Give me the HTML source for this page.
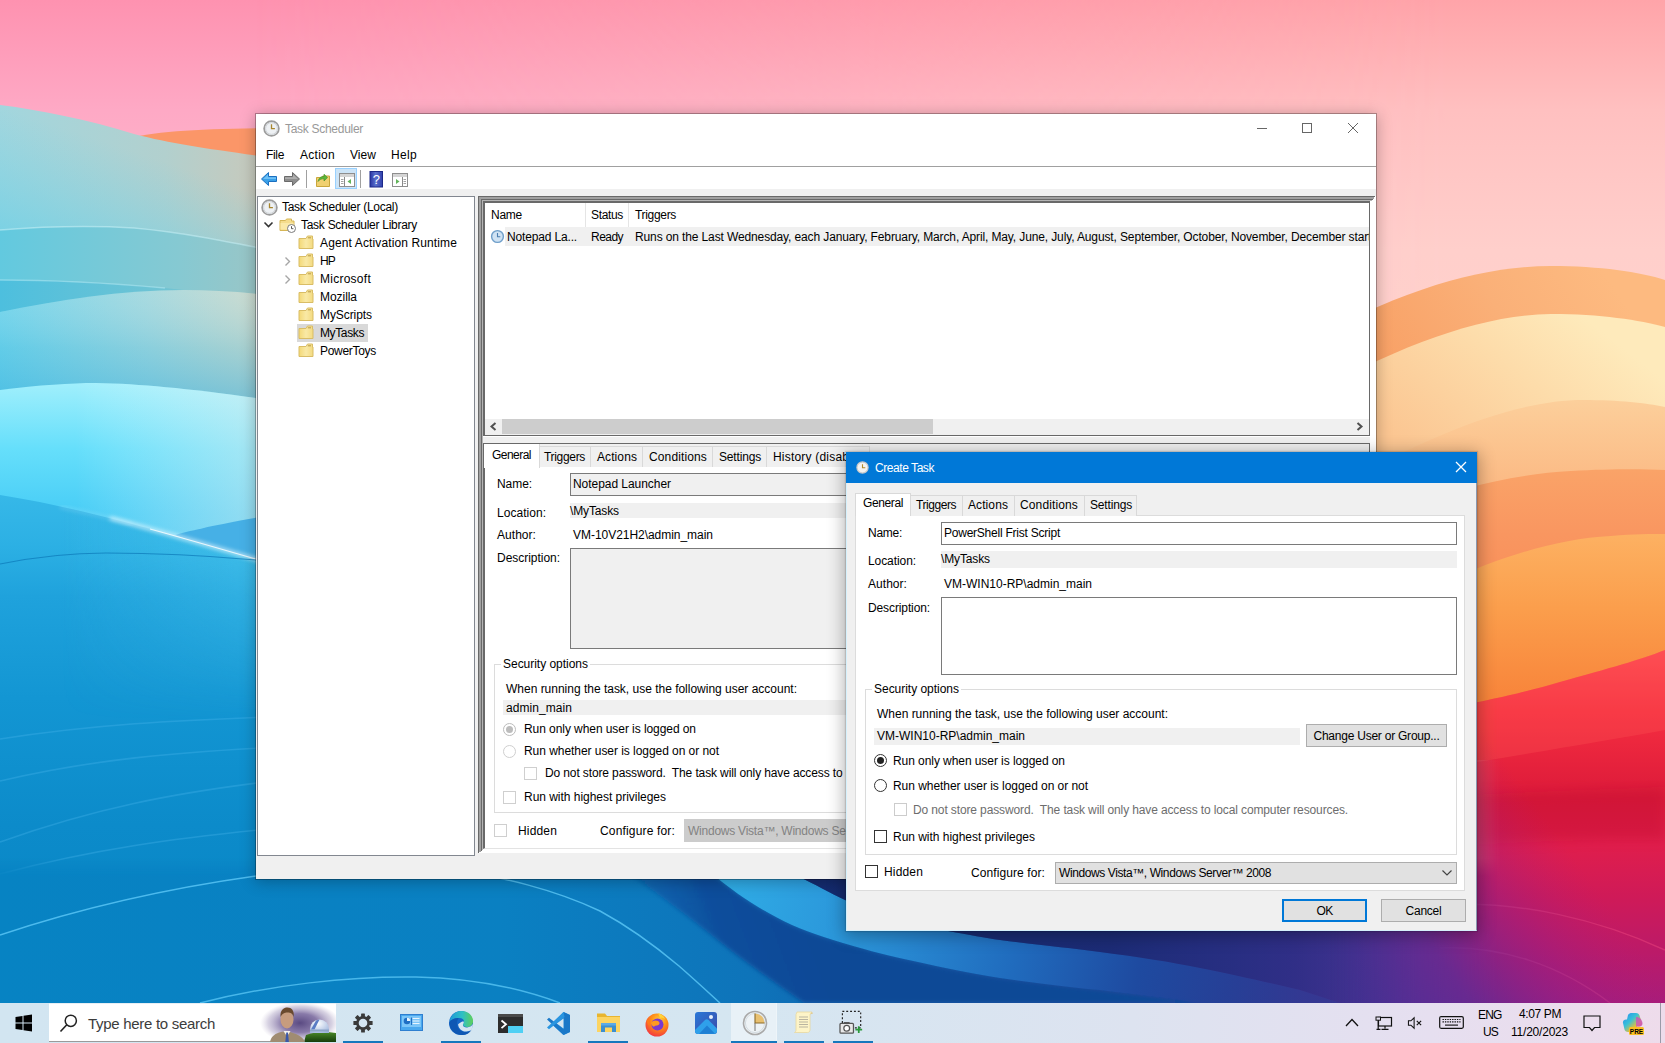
<!DOCTYPE html>
<html><head><meta charset="utf-8"><title>Task Scheduler</title>
<style>
html,body{margin:0;padding:0}
body{width:1665px;height:1043px;overflow:hidden;position:relative;background:#2b8fd0;font-family:"Liberation Sans",sans-serif;font-size:12px;color:#000}
.a{position:absolute}
.t{position:absolute;white-space:pre;line-height:16px;height:16px}
svg{position:absolute;display:block}
.win{position:absolute;left:256px;top:114px;width:1120px;height:765px;background:#f0f0f0;box-shadow:0 0 0 1px rgba(0,0,0,.28),0 2px 14px 1px rgba(0,0,0,.26)}
.dlg{position:absolute;left:846px;top:452px;width:629px;height:477px;background:#f0f0f0;border:1px solid #0078d7;border-left-color:#d4f0fc;border-bottom-color:#d4f0fc;border-right-color:#8a98b0;box-shadow:0 0 1px 1px rgba(0,0,0,.12),0 3px 16px 2px rgba(0,0,0,.3)}
.tab{position:absolute;background:#f0f0f0;border:1px solid #d9d9d9;border-bottom:none;box-sizing:border-box}
.tabsel{position:absolute;background:#fff;border:1px solid #d9d9d9;border-bottom:none;box-sizing:border-box}
.cb{position:absolute;width:13px;height:13px;box-sizing:border-box;border:1px solid #333;background:#fff}
.rb{position:absolute;width:13px;height:13px;box-sizing:border-box;border:1px solid #333;background:#fff;border-radius:50%}
.btn{position:absolute;box-sizing:border-box;border:1px solid #adadad;background:#e1e1e1;text-align:center}
</style></head><body>
<svg class="a" style="left:0;top:0" width="1665" height="1043" viewBox="0 0 1665 1043">
<defs>
<linearGradient id="sky" gradientUnits="userSpaceOnUse" x1="0" y1="0" x2="0" y2="500"><stop offset="0" stop-color="#fe92b0"/><stop offset=".22" stop-color="#fea9c5"/><stop offset=".45" stop-color="#feb9cb"/><stop offset=".7" stop-color="#fec8cc"/><stop offset="1" stop-color="#fed2cc"/></linearGradient>
<linearGradient id="skyR" gradientUnits="userSpaceOnUse" x1="0" y1="0" x2="0" y2="500"><stop offset="0" stop-color="#ffa4a9"/><stop offset=".22" stop-color="#ffc0c0"/><stop offset=".5" stop-color="#ffcfcb"/><stop offset="1" stop-color="#fed4cc"/></linearGradient><linearGradient id="skyM" gradientUnits="userSpaceOnUse" x1="250" y1="0" x2="1450" y2="0"><stop offset="0" stop-color="#fff" stop-opacity="0"/><stop offset="1" stop-color="#fff" stop-opacity="1"/></linearGradient><mask id="skm"><rect width="1665" height="600" fill="url(#skyM)"/></mask>
<linearGradient id="t1" x1="0" y1="0" x2="1" y2="0"><stop offset="0" stop-color="#a2d6de"/><stop offset=".55" stop-color="#b2d0ce"/><stop offset="1" stop-color="#d0c6b4"/></linearGradient>
<linearGradient id="t1v" gradientUnits="userSpaceOnUse" x1="40" y1="120" x2="0" y2="240"><stop offset="0" stop-color="#78d2e4" stop-opacity="0"/><stop offset="1" stop-color="#6ed0e6" stop-opacity=".8"/></linearGradient>
<linearGradient id="t2" x1="0" y1="0" x2="1" y2="0"><stop offset="0" stop-color="#62c9df"/><stop offset=".6" stop-color="#86c9d2"/><stop offset="1" stop-color="#a4c4c0"/></linearGradient>
<linearGradient id="t3" x1="0" y1="0" x2="1" y2="0"><stop offset="0" stop-color="#4dbfde"/><stop offset="1" stop-color="#74c4d2"/></linearGradient>
<linearGradient id="t4" x1="0" y1="0" x2="1" y2="0"><stop offset="0" stop-color="#6cd2ea"/><stop offset=".5" stop-color="#a0d6dc"/><stop offset="1" stop-color="#d6d8c4"/></linearGradient>
<linearGradient id="t4v" x1="0" y1="0" x2="0" y2="1"><stop offset="0" stop-color="#fff" stop-opacity=".1"/><stop offset=".5" stop-color="#38b4e0" stop-opacity=".2"/><stop offset="1" stop-color="#2aa8dc" stop-opacity=".5"/></linearGradient>
<linearGradient id="t5" x1="0" y1="0" x2="0" y2="1"><stop offset="0" stop-color="#a0effc"/><stop offset=".3" stop-color="#66dffb"/><stop offset=".6" stop-color="#48cdf6"/><stop offset="1" stop-color="#38bdf0"/></linearGradient>
<linearGradient id="t5h" x1="0" y1="0" x2="1" y2="0"><stop offset=".25" stop-color="#fff" stop-opacity="0"/><stop offset="1" stop-color="#f4eee6" stop-opacity=".55"/></linearGradient>
<linearGradient id="b1" gradientUnits="userSpaceOnUse" x1="0" y1="495" x2="0" y2="1003"><stop offset="0" stop-color="#36b8e8"/><stop offset=".1" stop-color="#2cb0e4"/><stop offset=".2" stop-color="#1fa2dc"/><stop offset=".4" stop-color="#1396d3"/><stop offset=".65" stop-color="#0c8bca"/><stop offset="1" stop-color="#0783c3"/></linearGradient><linearGradient id="b1h" gradientUnits="userSpaceOnUse" x1="60" y1="0" x2="256" y2="0"><stop offset="0" stop-color="#5ad0f0" stop-opacity="0"/><stop offset="1" stop-color="#5ad0f0" stop-opacity=".45"/></linearGradient><linearGradient id="b1hm" gradientUnits="userSpaceOnUse" x1="0" y1="540" x2="0" y2="720"><stop offset="0" stop-color="#fff" stop-opacity="1"/><stop offset="1" stop-color="#fff" stop-opacity="0"/></linearGradient><mask id="b1m"><rect x="0" y="480" width="300" height="260" fill="url(#b1hm)"/></mask>
<linearGradient id="bot" x1="0" y1="0" x2="1" y2="0"><stop offset="0" stop-color="#0783c3"/><stop offset=".3" stop-color="#0a80c2"/><stop offset=".45" stop-color="#0e74ba"/><stop offset=".55" stop-color="#1260ac"/><stop offset=".65" stop-color="#1a4c9e"/><stop offset=".74" stop-color="#2c3e98"/><stop offset=".8" stop-color="#433696"/><stop offset=".87" stop-color="#6a2c94"/><stop offset=".94" stop-color="#92208e"/><stop offset="1" stop-color="#b41c80"/></linearGradient>
<linearGradient id="botm" gradientUnits="userSpaceOnUse" x1="0" y1="858" x2="0" y2="876"><stop offset="0" stop-color="#fff" stop-opacity="0"/><stop offset="1" stop-color="#fff" stop-opacity="1"/></linearGradient>
<mask id="mbot"><rect x="0" y="840" width="1665" height="203" fill="url(#botm)"/></mask>
<linearGradient id="d1" gradientUnits="userSpaceOnUse" x1="1600" y1="266" x2="1400" y2="400"><stop offset="0" stop-color="#fdba80"/><stop offset=".45" stop-color="#fab078"/><stop offset="1" stop-color="#f8a065"/></linearGradient>
<linearGradient id="d2" gradientUnits="userSpaceOnUse" x1="1580" y1="314" x2="1450" y2="480"><stop offset="0" stop-color="#feeabb"/><stop offset=".4" stop-color="#fddcaa"/><stop offset="1" stop-color="#fbc692"/></linearGradient>
<linearGradient id="d3" gradientUnits="userSpaceOnUse" x1="0" y1="400" x2="0" y2="500"><stop offset="0" stop-color="#fccf9b"/><stop offset="1" stop-color="#fbb680"/></linearGradient>
<linearGradient id="d4" gradientUnits="userSpaceOnUse" x1="0" y1="470" x2="0" y2="600"><stop offset="0" stop-color="#faa368"/><stop offset=".5" stop-color="#f99660"/><stop offset="1" stop-color="#f98e58"/></linearGradient>
<linearGradient id="d5" gradientUnits="userSpaceOnUse" x1="0" y1="534" x2="0" y2="700"><stop offset="0" stop-color="#fdb162"/><stop offset=".45" stop-color="#fb9e4c"/><stop offset="1" stop-color="#f8843a"/></linearGradient>
<linearGradient id="r1" gradientUnits="userSpaceOnUse" x1="0" y1="650" x2="0" y2="1003"><stop offset="0" stop-color="#fe4a52"/><stop offset=".18" stop-color="#f52e40"/><stop offset=".42" stop-color="#dc1a3a"/><stop offset=".55" stop-color="#e01e4c"/><stop offset=".7" stop-color="#cf1a58"/><stop offset=".85" stop-color="#bc1a68"/><stop offset="1" stop-color="#a81c7a"/></linearGradient>
<linearGradient id="r2" gradientUnits="userSpaceOnUse" x1="1380" y1="1030" x2="1590" y2="880"><stop offset="0" stop-color="#3e3096" stop-opacity="1"/><stop offset=".35" stop-color="#5a2c94" stop-opacity=".85"/><stop offset=".7" stop-color="#8a208c" stop-opacity=".4"/><stop offset="1" stop-color="#b01c78" stop-opacity="0"/></linearGradient>
<linearGradient id="rmg" gradientUnits="userSpaceOnUse" x1="1330" y1="0" x2="1500" y2="0"><stop offset="0" stop-color="#fff" stop-opacity="0"/><stop offset="1" stop-color="#fff" stop-opacity="1"/></linearGradient><mask id="rm"><rect x="1300" y="600" width="365" height="443" fill="url(#rmg)"/></mask>
<linearGradient id="nv" gradientUnits="userSpaceOnUse" x1="800" y1="0" x2="1420" y2="0"><stop offset="0" stop-color="#14286c" stop-opacity=".95"/><stop offset=".5" stop-color="#1c2a74" stop-opacity=".95"/><stop offset=".8" stop-color="#2c2a80" stop-opacity=".7"/><stop offset="1" stop-color="#3a2c84" stop-opacity="0"/></linearGradient><linearGradient id="bb" gradientUnits="userSpaceOnUse" x1="730" y1="880" x2="1300" y2="1000"><stop offset="0" stop-color="#2fabe5"/><stop offset=".25" stop-color="#2a92d8"/><stop offset=".5" stop-color="#206cbe"/><stop offset=".72" stop-color="#1e4aa0"/><stop offset="1" stop-color="#2a388e" stop-opacity=".5"/></linearGradient><linearGradient id="dk" gradientUnits="userSpaceOnUse" x1="640" y1="960" x2="800" y2="900"><stop offset="0" stop-color="#0a64b0" stop-opacity=".5"/><stop offset=".5" stop-color="#094e9c"/><stop offset="1" stop-color="#0a4896"/></linearGradient>
<filter id="bl2"><feGaussianBlur stdDeviation="2"/></filter>
<filter id="bl6"><feGaussianBlur stdDeviation="6"/></filter>
<filter id="bl20"><feGaussianBlur stdDeviation="20"/></filter>
</defs>
<rect width="1665" height="1043" fill="url(#sky)"/>
<rect width="1665" height="600" fill="url(#skyR)" mask="url(#skm)"/>
<!-- right dunes -->
<path d="M1300 345 C1400 290 1480 266 1551 266 C1600 266 1640 272 1665 280 L1665 700 L1300 700Z" fill="url(#d1)"/>
<path d="M1300 400 C1400 345 1480 315 1551 314 C1600 314 1640 320 1665 327 L1665 700 L1300 700Z" fill="url(#d2)"/>
<path d="M1350 480 C1440 430 1520 400 1583 400 C1620 400 1645 403 1665 407 L1665 700 L1350 700Z" fill="url(#d3)"/>
<path d="M1376 520 C1440 492 1510 474 1571 471 C1610 469 1640 469 1665 470 L1665 720 L1376 720Z" fill="url(#d4)"/>
<path d="M1376 620 C1440 580 1530 540 1611 536 C1635 534 1650 534 1665 534 L1665 760 L1376 760Z" fill="url(#d5)"/>
<!-- red -->
<!-- left orange sliver -->
<path d="M120 140 C160 130 210 128 300 128 L300 175 L120 175Z" fill="#fb9668"/>
<!-- teal layers -->
<path d="M0 105 C40 110 90 120 134 134 C180 146 220 150 300 162 L300 420 L0 420Z" fill="url(#t1)"/>
<path d="M0 105 C40 110 90 120 134 134 C180 146 220 150 300 162 L300 260 L0 232Z" fill="url(#t1v)"/>
<path d="M0 230 C50 226 100 226 134 228 C180 232 220 240 300 256 L300 420 L0 420Z" fill="url(#t2)"/>
<path d="M0 280 C60 280 120 284 165 288 L184 290 L0 312Z" fill="url(#t3)"/>
<path d="M0 230 C50 226 100 226 134 228 C180 232 220 240 300 256" fill="none" stroke="#c8f0f6" stroke-width="1.500" opacity=".55"/>
<path d="M0 280 C60 280 120 284 165 288" fill="none" stroke="#b8ecf6" stroke-width="1.300" opacity=".5"/>
<path d="M0 312 C60 300 120 290 184 290 C220 290 260 293 300 300 L300 420 L0 420Z" fill="url(#t4)"/>
<path d="M0 312 C60 300 120 290 184 290 C220 290 260 293 300 300 L300 405 L0 392Z" fill="url(#t4v)"/>
<path d="M0 390 C40 385 70 383 96 383 C150 384 200 390 300 404 L300 600 L0 600Z" fill="url(#t5)"/>
<path d="M0 390 C40 385 70 383 96 383 C150 384 200 390 300 404 L300 600 L0 600Z" fill="url(#t5h)"/>
<!-- blue -->
<path d="M175 535 C200 528 230 522 300 510 L300 580Z" fill="#46b0e6"/>
<path d="M0 495 C50 503 90 513 132 524 C180 537 220 549 300 572 L1350 572 L1350 1043 L0 1043Z" fill="url(#b1)"/>
<path d="M0 495 C50 503 90 513 132 524 C180 537 220 549 300 572 L300 740 L0 740Z" fill="url(#b1h)" mask="url(#b1m)"/>
<path d="M60 507 C90 513 110 518 132 524" fill="none" stroke="#bfeeff" stroke-width="1.500" opacity=".5" filter="url(#bl2)"/>
<path d="M110 518 C170 534 220 549 300 572" fill="none" stroke="#e6f9ff" stroke-width="3" opacity=".9" filter="url(#bl2)"/><path d="M150 529 C190 540 225 550 300 572" fill="none" stroke="#fff" stroke-width="1.200" opacity=".8"/>
<path d="M0 564 C40 556 80 553 106 553 C150 553 200 555 256 560" fill="none" stroke="#0c78b8" stroke-width="1.200" opacity=".7"/>
<g fill="none" stroke="#4db8ee" stroke-width="1.600" opacity=".32">
<path d="M0 739 C90 725 170 720 300 716"/><path d="M0 781 C90 760 170 752 300 746"/><path d="M0 842 C90 810 170 792 300 778"/><path d="M0 874 C90 850 170 838 300 826"/>
</g>
<!-- bottom band -->
<g mask="url(#mbot)"><rect x="0" y="840" width="1665" height="203" fill="url(#bot)"/>
<path d="M631 876 C660 895 695 922 720 942 C750 966 780 986 804 1003 L1200 1003 C1170 998 1130 994 1100 990 C1060 986 1030 982 1000 978 C975 974 955 970 936 966 C905 959 885 955 864 949 C835 941 810 933 792 925 C760 910 735 893 715 876Z" fill="url(#dk)" filter="url(#bl2)"/>
<path d="M797 876 C815 884 830 893 845 900 C880 915 915 924 948 931 C970 935 985 938 1000 940 C1040 945 1070 948 1100 952 C1140 957 1170 962 1200 968 C1240 976 1270 983 1300 990 L1340 1003 L1200 1003 C1170 998 1130 994 1100 990 C1060 986 1030 982 1000 978 C975 974 955 970 936 966 C905 959 885 955 864 949 C835 941 810 933 792 925 C760 910 735 893 715 876Z" fill="url(#bb)"/>
<path d="M797 876 C815 884 830 893 845 900 C880 915 915 924 948 931 C970 935 985 938 1000 940 C1040 945 1070 948 1100 952 C1140 957 1170 962 1200 968 C1240 976 1270 983 1300 990 L1340 1003 L1665 1003 L1665 850 L797 850Z" fill="url(#nv)"/>
</g>
<g mask="url(#rm)"><path d="M1300 738 C1450 708 1510 697 1560 682 C1610 668 1640 660 1665 650 L1665 1043 L1300 1043Z" fill="url(#r1)"/>
<path d="M1400 775 C1500 758 1600 742 1665 730 L1665 650 C1640 660 1610 668 1560 682 C1510 697 1450 708 1400 718Z" fill="#ff5a56" opacity=".28"/>
<path d="M1400 800 C1500 792 1600 790 1665 787 L1665 840 C1600 838 1500 842 1400 850Z" fill="#c01030" opacity=".35" filter="url(#bl6)"/>
<path d="M1440 905 C1520 900 1600 920 1665 950" fill="none" stroke="#f04a80" stroke-width="1.500" opacity=".45"/>
<path d="M1440 948 C1500 945 1560 965 1610 1003" fill="none" stroke="#e04a90" stroke-width="1.500" opacity=".4"/>
<path d="M1300 738 C1450 708 1510 697 1560 682 C1610 668 1640 660 1665 650 L1665 1043 L1300 1043Z" fill="url(#r2)"/></g>
<path d="M0 935 C90 905 170 888 256 876 C330 868 400 868 440 870 C500 874 560 892 600 911 C635 930 660 950 679 966 C695 980 708 992 720 1003" fill="none" stroke="#58c4f4" stroke-width="1.500" opacity=".85"/>
<path d="M200 1003 C270 985 350 976 416 977 C470 978 520 988 560 1003" fill="none" stroke="#58c4f4" stroke-width="1.500" opacity=".8"/>
</svg>
<div class="win"></div>
<div class="a" id="mw" style="left:0;top:0;width:1376px;height:879px;overflow:hidden">
<!-- title + menu + toolbar -->
<div class="a" style="left:256px;top:114px;width:1120px;height:75px;background:#fff"></div>
<div class="a" style="left:256px;top:166px;width:1120px;height:1px;background:#a0a0a0"></div>
<svg style="left:263px;top:120px" width="17" height="17" viewBox="0 0 17 17"><circle cx="8.500" cy="8.500" r="7.400" fill="#eef1f4" stroke="#9c9c9c" stroke-width="1.700"/><circle cx="8.500" cy="8.500" r="5.900" fill="none" stroke="#d0d4d8" stroke-width="1"/><path d="M8.500 4.200v4.500h3.400" fill="none" stroke="#a8862e" stroke-width="1.300"/></svg>
<div class="t" style="left:285px;top:121px;color:#999"><span style="letter-spacing:-0.289px">Task Scheduler</span></div>
<div class="a" style="left:1257px;top:128px;width:10px;height:1px;background:#666"></div>
<div class="a" style="left:1302px;top:123px;width:8px;height:8px;border:1px solid #666"></div>
<svg style="left:1347px;top:122px" width="12" height="12" viewBox="0 0 12 12"><path d="M1 1l10 10M11 1L1 11" stroke="#666" stroke-width="1" fill="none"/></svg>
<div class="t" style="left:266px;top:147px"><span style="letter-spacing:-0.336px">File</span></div>
<div class="t" style="left:300px;top:147px"><span style="letter-spacing:0.273px">Action</span></div>
<div class="t" style="left:350px;top:147px"><span style="letter-spacing:0.051px">View</span></div>
<div class="t" style="left:391px;top:147px"><span style="letter-spacing:0.328px">Help</span></div>
<!-- toolbar icons -->
<svg style="left:260px;top:171px" width="18" height="16" viewBox="0 0 18 16"><path d="M1.5 8 L8.5 1.5 V5.5 H16.5 V10.5 H8.5 V14.5Z" fill="#3aa0e8" stroke="#1b6fc0" stroke-width="1"/><path d="M3 8 L8 3.5V6.3H16V8Z" fill="#7cc8f8" opacity=".8"/></svg>
<svg style="left:283px;top:171px" width="18" height="16" viewBox="0 0 18 16"><path d="M16.5 8 L9.5 1.5 V5.5 H1.5 V10.5 H9.5 V14.5Z" fill="#8e8e8e" stroke="#6a6a6a" stroke-width="1"/><path d="M15 8 L10 3.5V6.3H2V8Z" fill="#b5b5b5" opacity=".8"/></svg>
<div class="a" style="left:306px;top:170px;width:1px;height:18px;background:#a0a0a0"></div>
<svg style="left:315px;top:172px" width="16" height="16" viewBox="0 0 16 16"><path d="M1.5 5.5h5l1.2-1.5h6.8v10.5h-13z" fill="#f0d070" stroke="#c9a63c" stroke-width="1"/><path d="M3 9.5c1-4 3-5 6-5V2.2l3.5 3.4L9 9V6.8c-2.5 0-4.3.5-6 2.7z" fill="#5cb83c" stroke="#3a8a24" stroke-width=".6"/></svg>
<div class="a" style="left:335px;top:168px;width:22px;height:21px;box-sizing:border-box;background:#cce4f7;border:1px solid #99d1ff"></div>
<svg style="left:339px;top:172px" width="16" height="16" viewBox="0 0 16 16"><rect x=".5" y="1.5" width="15" height="13" fill="#fff" stroke="#8e8e8e"/><rect x="1" y="2" width="14" height="3" fill="#d4d4d4"/><path d="M5.5 5v9.5" stroke="#8a8a8a"/><path d="M2 7.5h2.5M2 9.5h2.5M2 11.5h2.5" stroke="#8a8a8a" stroke-width=".8"/><path d="M12 7v5l-3.500-2.500z" fill="#62b45a"/></svg>
<div class="a" style="left:360px;top:170px;width:1px;height:18px;background:#a0a0a0"></div>
<svg style="left:369px;top:171px" width="15" height="17" viewBox="0 0 15 17"><defs><linearGradient id="hg" x1="0" y1="0" x2="1" y2="0"><stop offset="0" stop-color="#2a36a4"/><stop offset=".45" stop-color="#5a70cc"/><stop offset="1" stop-color="#3040ac"/></linearGradient></defs><rect x="1" y=".5" width="12.500" height="15.500" fill="url(#hg)" stroke="#1c2888"/><text x="7.4" y="13" font-family="Liberation Sans,sans-serif" font-size="13" fill="#fff" text-anchor="middle">?</text></svg>
<svg style="left:392px;top:172px" width="16" height="16" viewBox="0 0 16 16"><rect x=".5" y="1.5" width="15" height="13" fill="#fff" stroke="#8e8e8e"/><rect x="1" y="2" width="14" height="3" fill="#d4d4d4"/><path d="M10.5 5v9.5" stroke="#8a8a8a"/><path d="M11.5 7.5h2.5M11.5 9.5h2.5M11.5 11.5h2.5" stroke="#8a8a8a" stroke-width=".8"/><path d="M4 7v5l3.500-2.500z" fill="#62b45a"/></svg>
<!-- left tree pane -->
<div class="a" style="left:257px;top:196px;width:218px;height:660px;box-sizing:border-box;background:#fff;border:1px solid #828790"></div>
<div class="a" style="left:297px;top:324px;width:71px;height:18px;background:#d9d9d9"></div>
<svg style="left:261px;top:199px" width="17" height="17" viewBox="0 0 17 17"><circle cx="8.500" cy="8.500" r="7.400" fill="#eef1f4" stroke="#9c9c9c" stroke-width="1.700"/><circle cx="8.500" cy="8.500" r="5.900" fill="none" stroke="#d0d4d8" stroke-width="1"/><path d="M8.500 4.200v4.500h3.400" fill="none" stroke="#a8862e" stroke-width="1.300"/></svg>
<div class="t" style="left:282px;top:199px"><span style="letter-spacing:-0.276px">Task Scheduler (Local)</span></div>
<svg style="left:263px;top:221px" width="11" height="8" viewBox="0 0 11 8"><path d="M1.5 1.5l4 4 4-4" fill="none" stroke="#333" stroke-width="1.6"/></svg>
<svg style="left:279px;top:216px" width="18" height="18" viewBox="0 0 18 18"><path d="M1 4.5h5.5l1-1.5h5v2h2.5v9.500h-14z" fill="#f5dc8c" stroke="#d6b656" stroke-width="1"/><path d="M1.500 7h13v6.500h-13z" fill="#fbe9a8"/><circle cx="12.500" cy="12.500" r="4" fill="#fff" stroke="#7a7a7a" stroke-width="1"/><path d="M12.500 10.200v2.500h1.900" fill="none" stroke="#555" stroke-width="1"/></svg>
<div class="t" style="left:301px;top:217px"><span style="letter-spacing:-0.276px">Task Scheduler Library</span></div>
<svg style="left:298px;top:235px" width="16" height="15" viewBox="0 0 16 15"><defs><linearGradient id="fg" x1="0" y1="0" x2="1" y2="0"><stop offset="0" stop-color="#f3d876"/><stop offset=".5" stop-color="#f9e9a6"/><stop offset="1" stop-color="#f3da80"/></linearGradient></defs><path d="M1 3.500h7l1.500-2.500h5v3h.5v9.500h-14z" fill="url(#fg)" stroke="#d9bd66" stroke-width="1"/><path d="M9.800 2.800h3.200" stroke="#b99b48" stroke-width="1"/></svg>
<div class="t" style="left:320px;top:235px"><span style="letter-spacing:0.122px">Agent Activation Runtime</span></div>
<svg style="left:298px;top:253px" width="16" height="15" viewBox="0 0 16 15"><path d="M1 3.500h7l1.500-2.500h5v3h.5v9.500h-14z" fill="url(#fg)" stroke="#d9bd66" stroke-width="1"/><path d="M9.800 2.800h3.200" stroke="#b99b48" stroke-width="1"/></svg>
<div class="t" style="left:320px;top:253px"><span style="letter-spacing:-0.800px">HP</span></div>
<svg style="left:284px;top:256px" width="8" height="11" viewBox="0 0 8 11"><path d="M1.500 1.500l4 4-4 4" fill="none" stroke="#a6a6a6" stroke-width="1.400"/></svg>
<svg style="left:298px;top:271px" width="16" height="15" viewBox="0 0 16 15"><path d="M1 3.500h7l1.500-2.500h5v3h.5v9.500h-14z" fill="url(#fg)" stroke="#d9bd66" stroke-width="1"/><path d="M9.800 2.800h3.200" stroke="#b99b48" stroke-width="1"/></svg>
<div class="t" style="left:320px;top:271px"><span style="letter-spacing:0.257px">Microsoft</span></div>
<svg style="left:284px;top:274px" width="8" height="11" viewBox="0 0 8 11"><path d="M1.500 1.500l4 4-4 4" fill="none" stroke="#a6a6a6" stroke-width="1.400"/></svg>
<svg style="left:298px;top:289px" width="16" height="15" viewBox="0 0 16 15"><path d="M1 3.500h7l1.500-2.500h5v3h.5v9.500h-14z" fill="url(#fg)" stroke="#d9bd66" stroke-width="1"/><path d="M9.800 2.800h3.200" stroke="#b99b48" stroke-width="1"/></svg>
<div class="t" style="left:320px;top:289px"><span style="letter-spacing:-0.049px">Mozilla</span></div>
<svg style="left:298px;top:307px" width="16" height="15" viewBox="0 0 16 15"><path d="M1 3.500h7l1.500-2.500h5v3h.5v9.500h-14z" fill="url(#fg)" stroke="#d9bd66" stroke-width="1"/><path d="M9.800 2.800h3.200" stroke="#b99b48" stroke-width="1"/></svg>
<div class="t" style="left:320px;top:307px"><span style="letter-spacing:-0.075px">MyScripts</span></div>
<svg style="left:298px;top:325px" width="16" height="15" viewBox="0 0 16 15"><path d="M1 3.500h7l1.500-2.500h5v3h.5v9.500h-14z" fill="url(#fg)" stroke="#d9bd66" stroke-width="1"/><path d="M9.800 2.800h3.200" stroke="#b99b48" stroke-width="1"/></svg>
<div class="t" style="left:320px;top:325px"><span style="letter-spacing:-0.382px">MyTasks</span></div>
<svg style="left:298px;top:343px" width="16" height="15" viewBox="0 0 16 15"><path d="M1 3.500h7l1.500-2.500h5v3h.5v9.500h-14z" fill="url(#fg)" stroke="#d9bd66" stroke-width="1"/><path d="M9.800 2.800h3.200" stroke="#b99b48" stroke-width="1"/></svg>
<div class="t" style="left:320px;top:343px"><span style="letter-spacing:-0.299px">PowerToys</span></div>
<!-- right pane outer frame -->
<div class="a" style="left:478px;top:196px;width:898px;height:657px;background:#fff"></div>
<div class="a" style="left:478px;top:196px;width:897px;height:1px;background:#696969"></div>
<div class="a" style="left:478px;top:196px;width:1px;height:657px;background:#696969"></div>
<div class="a" style="left:479px;top:197px;width:895px;height:2px;background:#a0a0a0"></div>
<div class="a" style="left:479px;top:197px;width:2px;height:655px;background:#a0a0a0"></div>
<div class="a" style="left:481px;top:199px;width:892px;height:1px;background:#696969"></div>
<div class="a" style="left:481px;top:199px;width:1px;height:652px;background:#696969"></div>
<div class="a" style="left:482px;top:200px;width:890px;height:1px;background:#b4b4b4"></div>
<div class="a" style="left:482px;top:200px;width:1px;height:650px;background:#b4b4b4"></div>
<!-- list pane -->
<div class="a" style="left:483px;top:201px;width:887px;height:235px;box-sizing:border-box;background:#fff;border:2px solid #696969;border-right-width:1px;border-bottom-width:1px"></div>
<div class="a" style="left:483px;top:436px;width:887px;height:7px;background:#f0f0f0;border-top:1px solid #fff;box-sizing:border-box"></div>
<div class="a" style="left:585px;top:203px;width:1px;height:24px;background:#e5e5e5"></div>
<div class="a" style="left:628px;top:203px;width:1px;height:24px;background:#e5e5e5"></div>
<div class="t" style="left:491px;top:207px"><span style="letter-spacing:-0.254px">Name</span></div>
<div class="t" style="left:591px;top:207px"><span style="letter-spacing:-0.339px">Status</span></div>
<div class="t" style="left:635px;top:207px"><span style="letter-spacing:-0.322px">Triggers</span></div>
<div class="a" style="left:505px;top:227px;width:864px;height:19px;background:#f0f0f0"></div>
<svg style="left:490px;top:229px" width="15" height="15" viewBox="0 0 15 15"><circle cx="7.500" cy="7.500" r="5.900" fill="#cfe2f3" stroke="#6f9fca" stroke-width="1.400"/><path d="M7.500 4v3.700h2.800" fill="none" stroke="#4a7eb0" stroke-width="1.100"/></svg>
<div class="t" style="left:507px;top:229px"><span style="letter-spacing:-0.159px">Notepad La...</span></div>
<div class="t" style="left:591px;top:229px"><span style="letter-spacing:-0.537px">Ready</span></div>
<div class="a" style="left:635px;top:229px;width:734px;height:16px;overflow:hidden"><div class="t" style="left:0;top:0"><span style="letter-spacing:-0.124px">Runs on the Last Wednesday, each January, February, March, April, May, June, July, August, September, October, November, December starting</span></div></div>
<!-- h scrollbar -->
<div class="a" style="left:485px;top:419px;width:884px;height:16px;background:#f0f0f0"></div>
<div class="a" style="left:502px;top:419px;width:431px;height:15px;background:#cdcdcd"></div>
<svg style="left:489px;top:422px" width="8" height="9" viewBox="0 0 8 9"><path d="M6.500 1l-4 3.500 4 3.500" fill="none" stroke="#505050" stroke-width="2"/></svg>
<svg style="left:1356px;top:422px" width="8" height="9" viewBox="0 0 8 9"><path d="M1.500 1l4 3.500-4 3.500" fill="none" stroke="#505050" stroke-width="2"/></svg>
<!-- lower pane -->
<div class="a" style="left:483px;top:443px;width:887px;height:406px;box-sizing:border-box;background:#fff;border:2px solid #696969;border-top-width:1px;border-right-width:1px;border-bottom:1px solid #e3e3e3"></div>
<div class="a" style="left:485px;top:444px;width:884px;height:23px;background:#f0f0f0"></div>
<div class="a" style="left:485px;top:466px;width:884px;height:1px;background:#d9d9d9"></div>
<div class="tab" style="left:539px;top:446px;width:52px;height:21px"></div>
<div class="tab" style="left:590px;top:446px;width:53px;height:21px"></div>
<div class="tab" style="left:642px;top:446px;width:71px;height:21px"></div>
<div class="tab" style="left:712px;top:446px;width:55px;height:21px"></div>
<div class="tab" style="left:766px;top:446px;width:104px;height:21px"></div>
<div class="tabsel" style="left:484px;top:444px;width:56px;height:24px;border-left:none;border-top:none"></div>
<div class="t" style="left:492px;top:447px"><span style="letter-spacing:-0.529px">General</span></div>
<div class="t" style="left:544px;top:449px"><span style="letter-spacing:-0.322px">Triggers</span></div>
<div class="t" style="left:597px;top:449px"><span style="letter-spacing:0.092px">Actions</span></div>
<div class="t" style="left:649px;top:449px"><span style="letter-spacing:0.130px">Conditions</span></div>
<div class="t" style="left:719px;top:449px"><span style="letter-spacing:-0.170px">Settings</span></div>
<div class="t" style="left:773px;top:449px"><span style="letter-spacing:0.201px">History (disabled)</span></div>
<div class="t" style="left:497px;top:476px"><span style="letter-spacing:-0.069px">Name:</span></div>
<div class="a" style="left:570px;top:473px;width:300px;height:23px;box-sizing:border-box;background:#f0f0f0;border:1px solid #7a7a7a"></div>
<div class="t" style="left:573px;top:476px"><span style="letter-spacing:-0.047px">Notepad Launcher</span></div>
<div class="t" style="left:497px;top:505px"><span style="letter-spacing:0.033px">Location:</span></div>
<div class="a" style="left:570px;top:503px;width:300px;height:15px;background:#f0f0f0"></div>
<div class="t" style="left:570px;top:503px"><span style="letter-spacing:-0.127px">\MyTasks</span></div>
<div class="t" style="left:497px;top:527px"><span style="letter-spacing:0.042px">Author:</span></div>
<div class="t" style="left:573px;top:527px"><span style="letter-spacing:-0.036px">VM-10V21H2\admin_main</span></div>
<div class="t" style="left:497px;top:550px"><span style="letter-spacing:-0.030px">Description:</span></div>
<div class="a" style="left:570px;top:548px;width:300px;height:101px;box-sizing:border-box;background:#f0f0f0;border:1px solid #7a7a7a"></div>
<div class="a" style="left:494px;top:664px;width:380px;height:149px;box-sizing:border-box;border:1px solid #dcdcdc"></div>
<div class="a" style="left:501px;top:656px;width:89px;height:16px;background:#fff"></div>
<div class="t" style="left:503px;top:656px"><span style="letter-spacing:-0.024px">Security options</span></div>
<div class="t" style="left:506px;top:681px"><span style="letter-spacing:-0.010px">When running the task, use the following user account:</span></div>
<div class="a" style="left:503px;top:700px;width:370px;height:15px;background:#f0f0f0"></div>
<div class="t" style="left:506px;top:700px"><span style="letter-spacing:0.062px">admin_main</span></div>
<div class="rb" style="left:503px;top:723px;border-color:#bcbcbc"></div><div class="a" style="left:506px;top:726px;width:7px;height:7px;border-radius:50%;background:#bcbcbc"></div>
<div class="t" style="left:524px;top:721px"><span style="letter-spacing:-0.069px">Run only when user is logged on</span></div>
<div class="rb" style="left:503px;top:745px;border-color:#cfcfcf"></div>
<div class="t" style="left:524px;top:743px"><span style="letter-spacing:-0.050px">Run whether user is logged on or not</span></div>
<div class="cb" style="left:524px;top:767px;border-color:#cfcfcf"></div>
<div class="t" style="left:545px;top:765px"><span style="letter-spacing:-0.124px">Do not store password.  The task will only have access to local computer resources.</span></div>
<div class="cb" style="left:503px;top:791px;border-color:#cfcfcf"></div>
<div class="t" style="left:524px;top:789px"><span style="letter-spacing:-0.028px">Run with highest privileges</span></div>
<div class="cb" style="left:494px;top:824px;border-color:#cfcfcf"></div>
<div class="t" style="left:518px;top:823px"><span style="letter-spacing:0.161px">Hidden</span></div>
<div class="t" style="left:600px;top:823px"><span style="letter-spacing:0.164px">Configure for:</span></div>
<div class="a" style="left:684px;top:819px;width:200px;height:23px;background:#cccccc"></div>
<div class="t" style="left:688px;top:823px;color:#838383"><span style="letter-spacing:-0.237px">Windows Vista™, Windows Server™ 2008</span></div>
</div>
<div class="dlg"></div>
<div class="a" id="dl" style="left:0;top:0">
<div class="a" style="left:846px;top:452px;width:631px;height:31px;background:#0078d7"></div>
<svg style="left:856px;top:461px" width="13" height="13" viewBox="0 0 13 13"><circle cx="6.5" cy="6.5" r="5.600" fill="#f2f2f0" stroke="#c9c9c9" stroke-width="1.200"/><path d="M6.500 3.200v3.600h2.800" fill="none" stroke="#b08a2a" stroke-width="1.100"/></svg>
<div class="t" style="left:875px;top:460px;color:#fff"><span style="letter-spacing:-0.438px">Create Task</span></div>
<svg style="left:1455px;top:461px" width="12" height="12" viewBox="0 0 12 12"><path d="M1 1l10 10M11 1L1 11" stroke="#fff" stroke-width="1.300" fill="none"/></svg>
<!-- tab control -->
<div class="a" style="left:855px;top:515px;width:610px;height:376px;box-sizing:border-box;background:#fff;border:1px solid #dcdcdc"></div>
<div class="tab" style="left:910px;top:495px;width:53px;height:21px"></div>
<div class="tab" style="left:962px;top:495px;width:53px;height:21px"></div>
<div class="tab" style="left:1014px;top:495px;width:71px;height:21px"></div>
<div class="tab" style="left:1084px;top:495px;width:53px;height:21px"></div>
<div class="tabsel" style="left:855px;top:493px;width:56px;height:23px"></div>
<div class="t" style="left:863px;top:495px"><span style="letter-spacing:-0.386px">General</span></div>
<div class="t" style="left:916px;top:497px"><span style="letter-spacing:-0.447px">Triggers</span></div>
<div class="t" style="left:968px;top:497px"><span style="letter-spacing:0.092px">Actions</span></div>
<div class="t" style="left:1020px;top:497px"><span style="letter-spacing:0.130px">Conditions</span></div>
<div class="t" style="left:1090px;top:497px"><span style="letter-spacing:-0.170px">Settings</span></div>
<div class="t" style="left:868px;top:525px"><span style="letter-spacing:-0.269px">Name:</span></div>
<div class="a" style="left:941px;top:522px;width:516px;height:23px;box-sizing:border-box;background:#fff;border:1px solid #7a7a7a"></div>
<div class="t" style="left:944px;top:525px"><span style="letter-spacing:-0.234px">PowerShell Frist Script</span></div>
<div class="t" style="left:868px;top:553px"><span style="letter-spacing:-0.078px">Location:</span></div>
<div class="a" style="left:941px;top:551px;width:516px;height:17px;background:#f0f0f0"></div>
<div class="t" style="left:941px;top:551px"><span style="letter-spacing:-0.127px">\MyTasks</span></div>
<div class="t" style="left:868px;top:576px"><span style="letter-spacing:0.042px">Author:</span></div>
<div class="t" style="left:944px;top:576px"><span style="letter-spacing:-0.002px">VM-WIN10-RP\admin_main</span></div>
<div class="t" style="left:868px;top:600px"><span style="letter-spacing:-0.113px">Description:</span></div>
<div class="a" style="left:941px;top:597px;width:516px;height:78px;box-sizing:border-box;background:#fff;border:1px solid #7a7a7a"></div>
<div class="a" style="left:865px;top:689px;width:592px;height:166px;box-sizing:border-box;border:1px solid #dcdcdc"></div>
<div class="a" style="left:872px;top:681px;width:89px;height:16px;background:#fff"></div>
<div class="t" style="left:874px;top:681px"><span style="letter-spacing:-0.024px">Security options</span></div>
<div class="t" style="left:877px;top:706px"><span style="letter-spacing:-0.010px">When running the task, use the following user account:</span></div>
<div class="a" style="left:874px;top:728px;width:426px;height:17px;background:#f0f0f0"></div>
<div class="t" style="left:877px;top:728px"><span style="letter-spacing:-0.002px">VM-WIN10-RP\admin_main</span></div>
<div class="btn" style="left:1306px;top:724px;width:141px;height:23px;line-height:22px"><span style="letter-spacing:-0.235px">Change User or Group...</span></div>
<div class="rb" style="left:874px;top:754px"></div><div class="a" style="left:877px;top:757px;width:7px;height:7px;border-radius:50%;background:#222"></div>
<div class="t" style="left:893px;top:753px"><span style="letter-spacing:-0.069px">Run only when user is logged on</span></div>
<div class="rb" style="left:874px;top:779px"></div>
<div class="t" style="left:893px;top:778px"><span style="letter-spacing:-0.050px">Run whether user is logged on or not</span></div>
<div class="cb" style="left:894px;top:803px;border-color:#cccccc"></div>
<div class="t" style="left:913px;top:802px;color:#6d6d6d"><span style="letter-spacing:-0.124px">Do not store password.  The task will only have access to local computer resources.</span></div>
<div class="cb" style="left:874px;top:830px"></div>
<div class="t" style="left:893px;top:829px"><span style="letter-spacing:-0.028px">Run with highest privileges</span></div>
<div class="cb" style="left:865px;top:865px"></div>
<div class="t" style="left:884px;top:864px"><span style="letter-spacing:0.161px">Hidden</span></div>
<div class="t" style="left:971px;top:865px"><span style="letter-spacing:0.093px">Configure for:</span></div>
<div class="a" style="left:1055px;top:862px;width:402px;height:22px;box-sizing:border-box;background:#e1e1e1;border:1px solid #adadad"></div>
<div class="t" style="left:1059px;top:865px"><span style="letter-spacing:-0.404px">Windows Vista™, Windows Server™ 2008</span></div>
<svg style="left:1441px;top:869px" width="12" height="8" viewBox="0 0 12 8"><path d="M1.500 1.500l4.500 4.500 4.500-4.500" fill="none" stroke="#444" stroke-width="1.200"/></svg>
<div class="btn" style="left:1282px;top:899px;width:85px;height:23px;line-height:20px;border:2px solid #0078d7"><span style="letter-spacing:-0.672px">OK</span></div>
<div class="btn" style="left:1381px;top:899px;width:85px;height:23px;line-height:22px"><span style="letter-spacing:-0.227px">Cancel</span></div>
</div>
<div class="a" id="tb" style="left:0;top:1003px;width:1665px;height:40px;background:linear-gradient(90deg,#d2e5f1 0%,#d5e6f1 45%,#dde3f0 68%,#e6dff0 86%,#eedceb 100%);overflow:hidden">
<!-- start -->
<svg style="left:15px;top:11px" width="18" height="18" viewBox="0 0 18 18"><path d="M.500 3 7.500 2V8.500H.500zM8.500 1.850 17 .6V8.500H8.500zM.500 9.500H7.500V16L.500 15zM8.500 9.500H17V17.400L8.500 16.150z" fill="#000"/></svg>
<!-- search box -->
<div class="a" style="left:49px;top:0;width:287px;height:39px;background:#fff;border-top:1px solid #e6eef4;border-bottom:1px solid #9a9a9a;box-sizing:border-box"></div>
<svg style="left:58px;top:9px" width="22" height="22" viewBox="0 0 22 22"><circle cx="12.800" cy="8.800" r="5.600" fill="none" stroke="#222" stroke-width="1.500"/><path d="M8.800 12.800 2.500 19.500" stroke="#222" stroke-width="1.600" fill="none"/></svg>
<div class="t" style="left:88px;top:11px;font-size:15px;line-height:20px;height:20px;color:#3c3c3c"><span style="letter-spacing:-0.294px">Type here to search</span></div>
<!-- search highlight art -->
<svg style="left:250px;top:1px" width="86" height="38" viewBox="0 0 86 38">
<defs><radialGradient id="gx" cx=".5" cy=".5" r=".5"><stop offset="0" stop-color="#5a4a82"/><stop offset=".45" stop-color="#7c6ca0" stop-opacity=".9"/><stop offset=".8" stop-color="#b0a6c6" stop-opacity=".5"/><stop offset="1" stop-color="#d0c8dc" stop-opacity="0"/></radialGradient>
<linearGradient id="gr" x1="0" y1="0" x2="0" y2="1"><stop offset="0" stop-color="#4a8a28"/><stop offset="1" stop-color="#163c0c"/></linearGradient>
<radialGradient id="dm" cx=".4" cy=".3" r=".8"><stop offset="0" stop-color="#ffffff"/><stop offset="1" stop-color="#9db4dc"/></radialGradient></defs>
<ellipse cx="50" cy="19" rx="40" ry="21" fill="url(#gx)"/>
<path d="M56 31c8-3 18-4 30-2v9H54z" fill="url(#gr)"/>
<path d="M60 25a9.500 9.500 0 0 1 19 0v4H60z" fill="url(#dm)"/><path d="M66 16.500l-5 9h3.500l5-10z" fill="#5a7cc4"/><path d="M60 25.500h19v2H60z" fill="#8fa6c8"/>
<path d="M20 38c1-6 6-9 11-10l6-1 9 3c5 2 8 5 9 8z" fill="#a08c72"/>
<path d="M33.500 27l3.500 5.500 3.500-5.500z" fill="#f4f2ee"/><path d="M36.300 28.500h1.600l1 9.500h-3.600z" fill="#3a58a8"/>
<ellipse cx="37" cy="15.500" rx="6.500" ry="9" fill="#c79c7e"/><path d="M30.500 13c-.5-7 3-9.500 7-9.500s7 3 6.200 9.500c-1-3.500-3-4.500-6.200-4.500s-5 1-7 4.500z" fill="#6a4a2e"/>
</svg>
<!-- running indicators -->
<div class="a" style="left:731px;top:0;width:45px;height:40px;background:rgba(255,255,255,.45)"></div>
<div class="a" style="left:776px;top:0;width:1px;height:40px;background:rgba(255,255,255,.6)"></div>
<div class="a" style="left:343px;top:38px;width:40px;height:2px;background:#1577bd"></div>
<div class="a" style="left:441px;top:38px;width:40px;height:2px;background:#1577bd"></div>
<div class="a" style="left:588px;top:38px;width:40px;height:2px;background:#1577bd"></div>
<div class="a" style="left:731px;top:38px;width:46px;height:2px;background:#1577bd"></div>
<div class="a" style="left:784px;top:38px;width:40px;height:2px;background:#1577bd"></div>
<div class="a" style="left:833px;top:38px;width:40px;height:2px;background:#1577bd"></div>
<!-- gear -->
<svg style="left:351px;top:8px" width="24" height="24" viewBox="-12 -12 24 24"><g fill="#3a3a3a"><circle r="6.900"/><g id="th"><rect x="-1.900" y="-9.600" width="3.800" height="4.500" rx=".5"/><rect x="-1.900" y="5.100" width="3.800" height="4.500" rx=".5"/></g><use href="#th" transform="rotate(45)"/><use href="#th" transform="rotate(90)"/><use href="#th" transform="rotate(135)"/></g><circle r="4.300" fill="#d4e5f1"/></svg>
<!-- control panel -->
<svg style="left:400px;top:11px" width="23" height="18" viewBox="0 0 23 18"><rect x=".5" y=".5" width="22" height="16" fill="#49a8ee" stroke="#2f7fd0"/><rect x="2" y="2" width="19" height="11" fill="#7cc6f8"/><circle cx="7" cy="7" r="3.300" fill="#1f6fc4"/><path d="M7 7V3.700A3.300 3.300 0 0 1 10.300 7z" fill="#e8f4fd"/><path d="M12.500 4.500h7M12.500 7h7M12.500 9.500h7" stroke="#e8f4fd" stroke-width="1.200"/><path d="M11.500 3.500v7.500" stroke="#1f6fc4" stroke-width="1.200"/></svg>
<!-- edge -->
<svg style="left:448px;top:7px" width="26" height="26" viewBox="0 0 26 26"><defs><linearGradient id="eg" x1="0" y1="0" x2="1" y2="0"><stop offset="0" stop-color="#1e9ad8"/><stop offset=".55" stop-color="#2fc0c4"/><stop offset="1" stop-color="#5fd05a"/></linearGradient></defs><circle cx="13" cy="13" r="12" fill="#1668c8"/><path d="M1.500 11C3 4.500 8 1 13.500 1c7 0 11.500 5 11.500 10 0 4-3 6-6 6-2.500 0-4-1-4-2.500 0-1 1-1.500 1-3 0-2-2-3.500-4.500-3.500C7 8 3 11 1.500 11z" fill="url(#eg)"/><path d="M9 13.500c0 5 4 9 9.500 8.500 2-.2 3.500-1 5-2-2 3.500-6 5.500-10.500 5C6 24.500 1 19 1.500 12c1.500-2.500 5-4.500 9.500-4-1.500 1.500-2 3.500-2 5.500z" fill="#0f58b4"/><path d="M15.800 11.800c.3 1.500-.9 2-.9 3.100 0 1.600 1.800 2.600 4.200 2.500 2.500-.1 4.500-1.300 5.600-3.400.4 2-.2 4-1.300 5.700-1.500 1-3 1.700-5 1.800-4.500.3-8-3-8.300-7.300 1-.6 2.300-1.600 3.300-2.200 1-.5 2.200-.6 2.400-.2z" fill="#d4e5f1"/></svg>
<!-- terminal -->
<svg style="left:498px;top:11px" width="25" height="19" viewBox="0 0 25 19"><rect width="25" height="19" fill="#2d2d2d"/><rect y="0" width="25" height="3" fill="#4a4a4a"/><path d="M3.500 6.500l4.500 3.800-4.500 3.800" fill="none" stroke="#fff" stroke-width="1.800"/><rect x="10" y="12" width="15" height="7" fill="#4fd0f4"/></svg>
<!-- vscode -->
<svg style="left:546px;top:8px" width="25" height="25" viewBox="0 0 25 25"><path d="M17.500 1 24 4v17l-6.500 3L6 13.500 17.500 1z" fill="#2a95e0"/><path d="M17.500 1 24 4v17l-6.500 3z" fill="#1a78c8"/><path d="M17.500 7.500v10L10.800 12.500z" fill="#d4e5f1"/><path d="M1 8.500l2-1.700 15.500 12.200-1 5L1 8.500z" fill="#1a78c8"/><path d="M1 16.500l2 1.700L18.500 6l-1-5L1 16.500z" fill="#2a95e0"/></svg>
<!-- explorer -->
<svg style="left:596px;top:9px" width="25" height="22" viewBox="0 0 25 22"><path d="M1 1.500h8l2 2.500h13v4H1z" fill="#e8b530"/><rect x="1" y="5" width="23" height="15" fill="#fcd462"/><path d="M5 20v-7.500h15V20h-4v-4.500h-7V20z" fill="#3c8fd0"/><rect x="5" y="11" width="15" height="2.500" fill="#5aaae8"/></svg>
<!-- firefox -->
<svg style="left:644px;top:8px" width="26" height="26" viewBox="0 0 26 26"><defs><radialGradient id="ff" cx=".6" cy=".3" r=".8"><stop offset="0" stop-color="#ffd43a"/><stop offset=".45" stop-color="#ff8a16"/><stop offset="1" stop-color="#f0284a"/></radialGradient></defs><circle cx="13" cy="14" r="11.500" fill="url(#ff)"/><path d="M14 2c3 1 6 3 7 6-3-2-5-1-5-1z" fill="#ffd43a"/><circle cx="13.500" cy="13.500" r="6" fill="#7a3ad0"/><path d="M7 12c2-3 5-3 7-2 2 1 2 3 .5 4-2 1-4 0-4.500 2-1-1-3-2-3-4z" fill="#ff9a20"/><path d="M3 8c1 1 2 1 3 1-1 2-1 4 0 6-2-1-4-4-3-7z" fill="#ff7a18"/></svg>
<!-- photos -->
<svg style="left:694px;top:8px" width="24" height="24" viewBox="0 0 24 24"><defs><linearGradient id="ph" x1="0" y1="0" x2="1" y2="1"><stop offset="0" stop-color="#2a78d8"/><stop offset="1" stop-color="#3a4aa8"/></linearGradient></defs><rect x="1" y="1" width="22" height="22" rx="3" fill="url(#ph)"/><circle cx="17" cy="6" r="2" fill="#e8f0fb"/><path d="M1 19 11 9c1-1 2.500-1 3.500 0L23 17.500V20a3 3 0 0 1-3 3H4a3 3 0 0 1-3-3z" fill="#2fa0ea"/><path d="M5 23 13 14.500l8 8.200z" fill="#1e7fd4"/></svg>
<!-- task scheduler clock -->
<svg style="left:742px;top:7px" width="26" height="26" viewBox="0 0 26 26"><circle cx="13" cy="13" r="11.500" fill="#eef3f6" stroke="#a9a9a9" stroke-width="1.600"/><circle cx="13" cy="13" r="9.600" fill="none" stroke="#d3dbe0" stroke-width="1"/><path d="M13 13V3.500A9.500 9.500 0 0 1 22.500 13z" fill="#e8c070"/><path d="M13 3.500V13h9.500" fill="none" stroke="#8a6a2a" stroke-width="1.100"/><path d="M13 13v8" stroke="#777" stroke-width="1"/></svg>
<!-- scroll/notepad -->
<svg style="left:792px;top:7px" width="24" height="24" viewBox="0 0 24 24"><path d="M5 2h15l-2 2.500V20c0 1.500-1 2.500-2.500 2.500H2.500C3.500 22 4 21 4 20V4.500z" fill="#fdf4c8" stroke="#e8d8a0" stroke-width=".8"/><path d="M7 7h9M7 9.500h9M7 12h9M7 14.500h9M7 17h9" stroke="#b9b4a0" stroke-width="1"/><path d="M18 4.500 20 2l1 1.500z" fill="#e0c890"/></svg>
<!-- snip -->
<svg style="left:839px;top:7px" width="27" height="26" viewBox="0 0 28 27"><rect x="3.500" y="1.500" width="19" height="17" fill="none" stroke="#222" stroke-width="1.200" stroke-dasharray="2 2"/><rect x="1" y="14" width="14" height="10" rx="1" fill="#e9e9e9" stroke="#555" stroke-width="1.300"/><rect x="5" y="12.500" width="6" height="2" fill="#555"/><circle cx="8" cy="19" r="3" fill="#fff" stroke="#555" stroke-width="1.300"/><path d="M20.500 17v7M17 20.500h7" stroke="#2a9a3a" stroke-width="1.800"/></svg>
<!-- tray -->
<svg style="left:1345px;top:15px" width="14" height="9" viewBox="0 0 14 9"><path d="M1 8l6-6.500L13 8" fill="none" stroke="#111" stroke-width="1.300"/></svg>
<svg style="left:1375px;top:13px" width="18" height="15" viewBox="0 0 18 15"><rect x="3.500" y="1.500" width="13" height="8.500" fill="none" stroke="#111" stroke-width="1.200"/><rect x="1" y="1" width="4.500" height="3.200" fill="#e4e0f0" stroke="#111" stroke-width="1"/><path d="M3.200 4.200V13M1.500 13.400h4M10 10v2.600M6.500 13.400h7" stroke="#111" stroke-width="1.200" fill="none"/></svg>
<svg style="left:1407px;top:13px" width="16" height="14" viewBox="0 0 17 16"><path d="M1 5.500h2.800L7.500 2v12L3.800 10.500H1z" fill="none" stroke="#111" stroke-width="1.200"/><path d="M10.500 5.500l5 5M15.500 5.500l-5 5" stroke="#111" stroke-width="1.300"/></svg>
<svg style="left:1439px;top:13px" width="25" height="13" viewBox="0 0 25 15" preserveAspectRatio="none"><rect x=".7" y=".7" width="23.600" height="13.600" rx="1.500" fill="none" stroke="#111" stroke-width="1.200"/><path d="M3.500 4h18M3.500 6.800h18" stroke="#111" stroke-width="1.300" stroke-dasharray="1.400 1"/><path d="M6 10.500h13" stroke="#111" stroke-width="1.300"/></svg>
<div class="t" style="left:1478px;top:4px"><span style="letter-spacing:-0.800px">ENG</span></div>
<div class="t" style="left:1483px;top:21px"><span style="letter-spacing:-0.800px">US</span></div>
<div class="t" style="left:1519px;top:3px"><span style="letter-spacing:-0.386px">4:07 PM</span></div>
<div class="t" style="left:1511px;top:21px"><span style="letter-spacing:-0.217px">11/20/2023</span></div>
<svg style="left:1583px;top:12px" width="18" height="18" viewBox="0 0 18 18"><path d="M1 1h16v11.500h-5.500L9 15.500 6.500 12.500H1z" fill="none" stroke="#111" stroke-width="1.200"/></svg>
<svg style="left:1620px;top:9px" width="25" height="25" viewBox="0 0 25 25"><defs><linearGradient id="cp" x1="0" y1="0" x2="1" y2="1"><stop offset="0" stop-color="#2a8af0"/><stop offset=".4" stop-color="#38c0d8"/><stop offset=".7" stop-color="#f0c030"/><stop offset="1" stop-color="#e850a0"/></linearGradient></defs><path d="M8 3c1-1.500 2-2 4-2h4c2 0 3 1 3.500 2.500L22 11c.5 2-1 3.500-3 3.500h-2l-1 3c-.5 1.500-2 2.500-3.500 2.500H8c-2 0-3-1-3.500-2.500L3 11c-.5-2 1-3.500 3-3.500h1z" fill="url(#cp)"/><path d="M16 5c3 0 6 2 6.500 6 .3 2-1 3.500-3.500 3.500h-3z" fill="#c850c0" opacity=".8"/><rect x="9" y="15" width="15" height="8" rx="1.500" fill="#fbbf24"/><text x="16.500" y="21.600" font-family="Liberation Sans,sans-serif" font-size="6.500" font-weight="bold" text-anchor="middle" fill="#000">PRE</text></svg>
<div class="a" style="left:1660px;top:0;width:1px;height:40px;background:#9a9aa8"></div>
</div>
</body></html>
